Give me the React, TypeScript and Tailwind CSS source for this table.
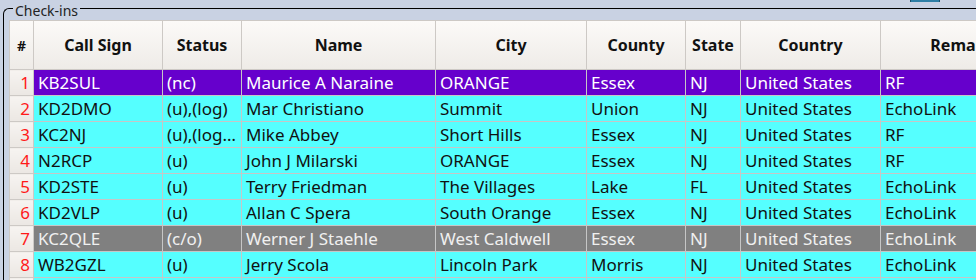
import React from 'react';

type Row = {
  call: string;
  status: string;
  name: string;
  city: string;
  county: string;
  state: string;
  country: string;
  remarks: string;
  tone: 'purple' | 'cyan' | 'gray';
};

const rows: Row[] = [
  { call: 'KB2SUL', status: '(nc)', name: 'Maurice A Naraine', city: 'ORANGE', county: 'Essex', state: 'NJ', country: 'United States', remarks: 'RF', tone: 'purple' },
  { call: 'KD2DMO', status: '(u),(log)', name: 'Mar Christiano', city: 'Summit', county: 'Union', state: 'NJ', country: 'United States', remarks: 'EchoLink', tone: 'cyan' },
  { call: 'KC2NJ', status: '(u),(log…', name: 'Mike Abbey', city: 'Short Hills', county: 'Essex', state: 'NJ', country: 'United States', remarks: 'RF', tone: 'cyan' },
  { call: 'N2RCP', status: '(u)', name: 'John J Milarski', city: 'ORANGE', county: 'Essex', state: 'NJ', country: 'United States', remarks: 'RF', tone: 'cyan' },
  { call: 'KD2STE', status: '(u)', name: 'Terry Friedman', city: 'The Villages', county: 'Lake', state: 'FL', country: 'United States', remarks: 'EchoLink', tone: 'cyan' },
  { call: 'KD2VLP', status: '(u)', name: 'Allan C Spera', city: 'South Orange', county: 'Essex', state: 'NJ', country: 'United States', remarks: 'EchoLink', tone: 'cyan' },
  { call: 'KC2QLE', status: '(c/o)', name: 'Werner J Staehle', city: 'West Caldwell', county: 'Essex', state: 'NJ', country: 'United States', remarks: 'EchoLink', tone: 'gray' },
  { call: 'WB2GZL', status: '(u)', name: 'Jerry Scola', city: 'Lincoln Park', county: 'Morris', state: 'NJ', country: 'United States', remarks: 'EchoLink', tone: 'cyan' },
  { call: '', status: '', name: '', city: '', county: '', state: '', country: '', remarks: '', tone: 'cyan' },
];

const columns = [
  { label: 'Call Sign', width: 'w-[129px]' },
  { label: 'Status', width: 'w-[79px]' },
  { label: 'Name', width: 'w-[194px]' },
  { label: 'City', width: 'w-[151px]' },
  { label: 'County', width: 'w-[99px]' },
  { label: 'State', width: 'w-[55px]' },
  { label: 'Country', width: 'w-[140px]' },
  { label: 'Remarks', width: 'w-[170px]' },
];

const toneClass = {
  purple: 'bg-[#6600cc] text-white',
  cyan: 'bg-[#55ffff] text-[#111]',
  gray: 'bg-[#808080] text-[#f0f0f0]',
};

export default function App() {
  return (
    <div
      className="w-[976px] h-[280px] overflow-hidden bg-[#c9d2e3] flex flex-col"
      style={{ fontFamily: '"Noto Sans", "Open Sans", sans-serif' }}
    >
      <div className="h-0 flex justify-end pr-[36px]">
        <div className="w-[30px] h-[2px] bg-[#2f7fa6] border-x border-[#1c4f6a]" />
      </div>
      <fieldset className="ml-[3px] flex-1 border-t border-l border-black rounded-tl-[6px] min-w-0">
        <legend className="ml-[9px] px-[2px] text-[14px] leading-[16px] text-[#222]">
          <span className="relative top-[3px]">Check-ins</span>
        </legend>
        <div className="ml-[5px] mt-[4px]">
          <table className="table-fixed border-collapse text-[17px] leading-[25px] w-[1041px]">
            <thead>
              <tr className="h-[49px] bg-gradient-to-b from-[#fcfaf8] to-[#eeebe7]">
                <th className="w-[24px] border border-[#cdc9c5] text-[14px] font-bold text-[#111]">#</th>
                {columns.map((c) => (
                  <th
                    key={c.label}
                    className={`${c.width} border border-[#cdc9c5] text-[16px] font-bold text-[#111] whitespace-nowrap overflow-hidden`}
                  >
                    {c.label}
                  </th>
                ))}
              </tr>
            </thead>
            <tbody>
              {rows.map((r, i) => (
                <tr key={i} className={`h-[26px] ${toneClass[r.tone]}`}>
                  <td className="border border-[#cdc9c5] bg-gradient-to-b from-[#f7f4f1] to-[#ebe7e3] text-right pr-[3px] text-[#ff1a1a]">
                    {r.call ? i + 1 : ''}
                  </td>
                  {[r.call, r.status, r.name, r.city, r.county, r.state, r.country, r.remarks].map((v, j) => (
                    <td key={j} className="border border-[#c6c6c6] pl-[4px] whitespace-nowrap overflow-hidden">
                      {v}
                    </td>
                  ))}
                </tr>
              ))}
            </tbody>
          </table>
        </div>
      </fieldset>
    </div>
  );
}
